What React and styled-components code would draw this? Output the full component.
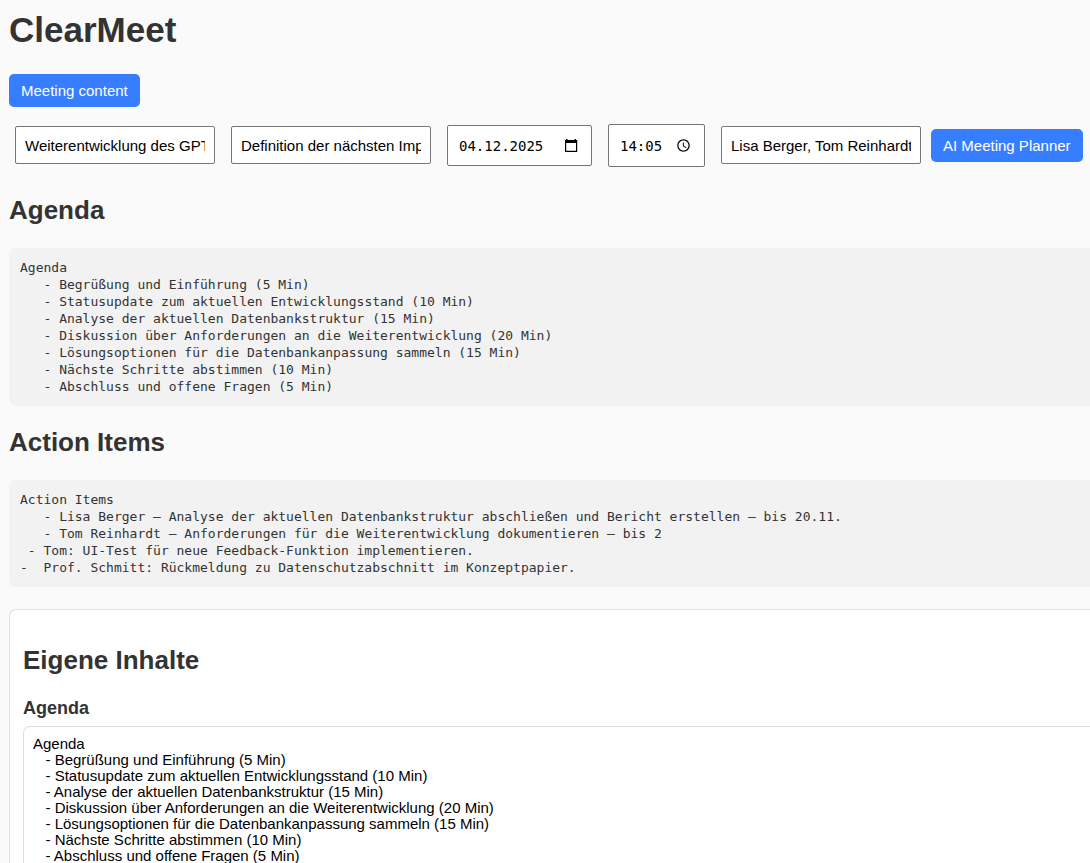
import React, { useState } from "react";
import styled, { createGlobalStyle } from "styled-components";

const agendaText = `Agenda
   - Begrüßung und Einführung (5 Min)
   - Statusupdate zum aktuellen Entwicklungsstand (10 Min)
   - Analyse der aktuellen Datenbankstruktur (15 Min)
   - Diskussion über Anforderungen an die Weiterentwicklung (20 Min)
   - Lösungsoptionen für die Datenbankanpassung sammeln (15 Min)
   - Nächste Schritte abstimmen (10 Min)
   - Abschluss und offene Fragen (5 Min)`;

const actionItemsText = `Action Items
   - Lisa Berger – Analyse der aktuellen Datenbankstruktur abschließen und Bericht erstellen – bis 20.11.
   - Tom Reinhardt – Anforderungen für die Weiterentwicklung dokumentieren – bis 2
 - Tom: UI-Test für neue Feedback-Funktion implementieren.
-  Prof. Schmitt: Rückmeldung zu Datenschutzabschnitt im Konzeptpapier.`;

export default function App() {
  const [meeting, setMeeting] = useState({
    title: "Weiterentwicklung des GPT",
    goal: "Definition der nächsten Imp",
    date: "04.12.2025",
    time: "14:05",
    participants: "Lisa Berger, Tom Reinhardt",
  });
  const [ownAgenda, setOwnAgenda] = useState(agendaText);

  const handleChange = (e) => {
    setMeeting({ ...meeting, [e.target.name]: e.target.value });
  };

  return (
    <Page>
      <GlobalStyle />
      <h1>ClearMeet</h1>
      <Button type="button">Meeting content</Button>

      <MeetingForm onSubmit={(e) => e.preventDefault()}>
        <TextInput
          name="title"
          aria-label="Titel"
          value={meeting.title}
          onChange={handleChange}
        />
        <TextInput
          name="goal"
          aria-label="Ziel"
          value={meeting.goal}
          onChange={handleChange}
        />
        <PickerField $width={145} $height={41}>
          <input
            name="date"
            aria-label="Datum"
            value={meeting.date}
            onChange={handleChange}
          />
          <CalendarIcon />
        </PickerField>
        <PickerField $width={97} $height={43}>
          <input
            name="time"
            aria-label="Uhrzeit"
            value={meeting.time}
            onChange={handleChange}
          />
          <ClockIcon />
        </PickerField>
        <TextInput
          name="participants"
          aria-label="Teilnehmer"
          value={meeting.participants}
          onChange={handleChange}
        />
        <Button type="submit">AI Meeting Planner</Button>
      </MeetingForm>

      <h2>Agenda</h2>
      <Output>{agendaText}</Output>

      <h2>Action Items</h2>
      <Output>{actionItemsText}</Output>

      <Card>
        <h2>Eigene Inhalte</h2>
        <h3>
          <label htmlFor="own-agenda">Agenda</label>
        </h3>
        <TextArea
          id="own-agenda"
          rows={10}
          value={ownAgenda}
          onChange={(e) => setOwnAgenda(e.target.value)}
        />
      </Card>
    </Page>
  );
}

function CalendarIcon() {
  return (
    <svg viewBox="0 0 15 15" aria-hidden="true">
      <path
        fillRule="evenodd"
        d="M3 1h1.5v1h7V1H13v1h1.2v12H2V2h1zM3.2 5v7.8H13V5z"
      />
    </svg>
  );
}

function ClockIcon() {
  return (
    <svg viewBox="0 0 24 24" aria-hidden="true">
      <path d="M11.99 2C6.47 2 2 6.48 2 12s4.47 10 9.99 10C17.52 22 22 17.52 22 12S17.52 2 11.99 2zM12 20c-4.42 0-8-3.58-8-8s3.58-8 8-8 8 3.58 8 8-3.58 8-8 8zm.5-13H11v6l5.25 3.15.75-1.23-4.5-2.67z" />
    </svg>
  );
}

const GlobalStyle = createGlobalStyle`
  body {
    margin: 0;
    background: #fafafa;
    color: #333333;
    font-family: "Liberation Sans", Arial, sans-serif;
  }

  h1 {
    margin: 0 0 24px;
    font-size: 35px;
    line-height: 40px;
  }

  h2 {
    margin: 21px 0 23px;
    font-size: 26px;
    line-height: 30px;
  }

  h3 {
    margin: 23px 0 8px;
    font-size: 18px;
    line-height: 20px;
  }
`;

const Page = styled.main`
  padding: 10px 0 22px 9px;
`;

const Button = styled.button`
  height: 33px;
  padding: 0 12px;
  border: none;
  border-radius: 5px;
  background: #377dff;
  color: #ffffff;
  font-family: inherit;
  font-size: 15px;
  line-height: 16px;
  cursor: pointer;
`;

const MeetingForm = styled.form`
  display: flex;
  flex-wrap: wrap;
  align-items: baseline;
  gap: 4px;
  margin: 17px 0 28px;
`;

const TextInput = styled.input`
  box-sizing: border-box;
  width: 200px;
  height: 38px;
  margin: 0 6px;
  padding: 0 9px;
  border: 1px solid #767676;
  border-radius: 2px;
  background: #ffffff;
  color: #000000;
  font-family: inherit;
  font-size: 15px;
`;

const PickerField = styled.div`
  box-sizing: border-box;
  display: flex;
  align-items: center;
  width: ${(props) => props.$width}px;
  height: ${(props) => props.$height}px;
  margin: 0 6px;
  padding: 0 13px 0 11px;
  border: 1px solid #767676;
  border-radius: 2px;
  background: #ffffff;

  input {
    flex: 1;
    min-width: 0;
    padding: 0;
    border: none;
    outline: none;
    background: none;
    color: #000000;
    font-family: "DejaVu Sans Mono", monospace;
    font-size: 14px;
  }

  svg {
    flex: none;
    width: 15px;
    height: 15px;
  }
`;

const Output = styled.pre`
  margin: 0;
  padding: 11px;
  border-radius: 7px 0 0 7px;
  background: #f2f2f2;
  font-family: "DejaVu Sans Mono", monospace;
  font-size: 13px;
  line-height: 17px;
  white-space: pre-wrap;
`;

const Card = styled.section`
  margin-top: 22px;
  padding: 14px 0 14px 13px;
  border: 1px solid #e0e0e0;
  border-right: none;
  border-radius: 7px 0 0 7px;
  background: #ffffff;
`;

const TextArea = styled.textarea`
  box-sizing: border-box;
  display: block;
  width: 100%;
  padding: 9px;
  border: 1px solid #dddddd;
  border-right: none;
  border-radius: 7px 0 0 7px;
  background: #ffffff;
  color: #000000;
  font-family: inherit;
  font-size: 15px;
  line-height: 16px;
  resize: none;
`;
